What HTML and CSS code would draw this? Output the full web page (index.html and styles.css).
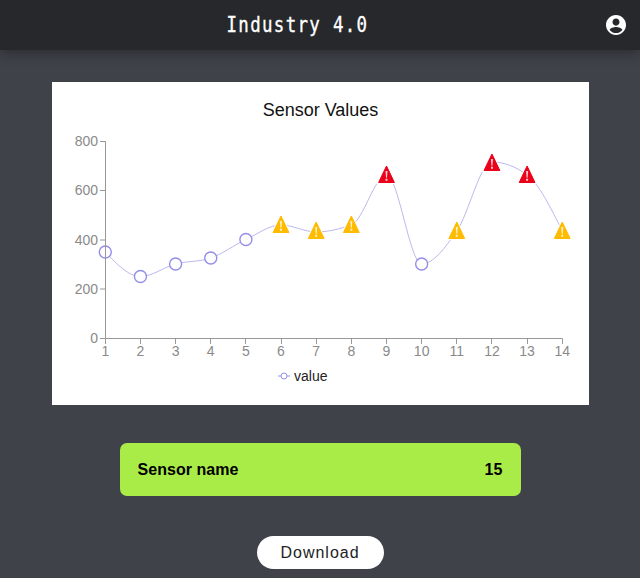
FILE: index.html
```html
<!DOCTYPE html>
<html lang="en">
<head>
<meta charset="utf-8">
<title>Industry 4.0</title>
<link rel="stylesheet" href="styles.css">
</head>
<body>
<header class="topbar">
  <h1 class="brand">Industry 4.0</h1>
  <svg class="account" viewBox="0 0 24 24" width="24" height="24" aria-hidden="true">
    <path fill="#fff" d="M12 2C6.48 2 2 6.48 2 12s4.48 10 10 10 10-4.48 10-10S17.52 2 12 2zm0 3.5c2.07 0 3.5 1.6 3.5 3.6S14.07 12.7 12 12.7 8.500 11.100 8.500 9.100 9.930 5.500 12 5.500zm0 14.600c-2.600 0-4.900-1.200-6.300-3.100.1-1.900 4.200-2.900 6.300-2.900s6.200 1 6.300 2.900c-1.400 1.900-3.700 3.100-6.300 3.100z"/>
  </svg>
</header>
<main class="content">
  <section class="chart-card">
    <svg class="chart" viewBox="52 82 537 323" width="537" height="323" role="img" aria-label="Sensor Values chart">
      <defs>
        <g id="warn">
          <path class="halo" d="M0-9.500 8.600 8H-8.600Z"/>
          <path class="tri" d="M0-9 7.900 7.500H-7.900Z"/>
          <path class="bang" d="M-1-4H1L.5 2.800H-.5ZM-1 3.800H1V5.800H-1Z"/>
        </g>
        <circle id="dot" r="6"/>
      </defs>
      <text class="title" x="320.500" y="115.500">Sensor Values</text>

      <g class="ticks y-ticks">
        <text x="98" y="146">800</text>
        <text x="98" y="195">600</text>
        <text x="98" y="245">400</text>
        <text x="98" y="294">200</text>
        <text x="98" y="343">0</text>
      </g>
      <g class="ticks x-ticks">
        <text x="105.300" y="356">1</text>
        <text x="140.450" y="356">2</text>
        <text x="175.600" y="356">3</text>
        <text x="210.750" y="356">4</text>
        <text x="245.900" y="356">5</text>
        <text x="281" y="356">6</text>
        <text x="316.200" y="356">7</text>
        <text x="351.350" y="356">8</text>
        <text x="386.500" y="356">9</text>
        <text x="421.650" y="356">10</text>
        <text x="456.800" y="356">11</text>
        <text x="491.950" y="356">12</text>
        <text x="527.100" y="356">13</text>
        <text x="562.250" y="356">14</text>
      </g>

      <path class="line" d="M105.300 252C117 264.300 128.700 276.500 140.450 276.500C152.200 276.500 163.900 267.100 175.600 264C187.300 260.900 199 262 210.750 258C222.500 254 234.200 245 245.900 239.500C257.600 234 269.300 225 281 225C292.700 225 304.500 232 316.200 232C327.900 232 339.600 229 351.350 225C363.100 221 374.800 175 386.500 175C398.200 175 409.900 264 421.650 264C433.400 264 445.100 247.800 456.800 231C468.500 214.200 480.200 162 491.950 162C503.700 162 515.400 166.300 527.100 175C538.800 183.700 550.500 207.300 562.250 231"/>

      <g class="dots">
        <use href="#dot" x="105.300" y="252"/>
        <use href="#dot" x="140.450" y="276.500"/>
        <use href="#dot" x="175.600" y="264"/>
        <use href="#dot" x="210.750" y="258"/>
        <use href="#dot" x="245.900" y="239.500"/>
        <use href="#dot" x="421.650" y="264"/>
      </g>
      <g class="axis">
        <path d="M105.500 141V338.500H562.500"/>
        <path d="M100 141.500H105.500M100 190.500H105.500M100 240H105.500M100 289H105.500M100 338.500H105.500"/>
        <path d="M105.500 338.500V344M140.500 338.500V344M175.500 338.500V344M210.500 338.500V344M245.500 338.500V344M281.500 338.500V344M316.500 338.500V344M351.500 338.500V344M386.500 338.500V344M421.500 338.500V344M456.500 338.500V344M491.500 338.500V344M527.500 338.500V344M562.500 338.500V344"/>
      </g>
      <g class="warn-amber">
        <use href="#warn" x="281" y="225"/>
        <use href="#warn" x="316.200" y="231"/>
        <use href="#warn" x="351.350" y="225"/>
        <use href="#warn" x="456.800" y="231"/>
        <use href="#warn" x="562.250" y="231"/>
      </g>
      <g class="warn-red">
        <use href="#warn" x="386.500" y="175"/>
        <use href="#warn" x="491.950" y="163"/>
        <use href="#warn" x="527.100" y="175"/>
      </g>

      <g class="legend">
        <path class="legend-line" d="M278 376H290"/>
        <circle class="legend-dot" cx="284" cy="376" r="3"/>
        <text x="294" y="380.500">value</text>
      </g>
    </svg>
  </section>
  <section class="sensor-bar">
    <span>Sensor name</span>
    <span>15</span>
  </section>
  <button class="download" type="button">Download</button>
</main>
</body>
</html>
```

FILE: styles.css
```css
* { box-sizing: border-box; }

html, body {
  margin: 0;
  height: 578px;
  overflow: hidden;
}

body {
  background: #3f4249;
  font-family: "Liberation Sans", Arial, sans-serif;
}

.topbar {
  position: relative;
  height: 50px;
  padding-right: 46px;
  background: #26282c;
  box-shadow: 0 3px 12px rgba(0, 0, 0, 0.35);
  display: flex;
  align-items: center;
  justify-content: center;
}

.brand {
  margin: 0;
  font-family: "DejaVu Sans Mono", monospace;
  font-size: 21px;
  font-weight: 400;
  letter-spacing: 1.6px;
  color: #fff;
  -webkit-text-stroke: 0.35px #fff;
  transform: scaleX(0.83);
}

.account {
  position: absolute;
  right: 12px;
  top: 13px;
}

.content {
  display: flex;
  flex-direction: column;
  align-items: center;
  padding-top: 32px;
}

.chart-card {
  width: 537px;
  height: 323px;
  background: #fff;
}

.chart {
  display: block;
}

.title {
  font-size: 18px;
  text-anchor: middle;
  fill: #111;
}

.axis path {
  fill: none;
  stroke: #989898;
  stroke-width: 1;
}

.ticks text {
  font-size: 14px;
  fill: #8a8a8a;
}

.y-ticks text { text-anchor: end; }
.x-ticks text { text-anchor: middle; }

.line {
  fill: none;
  stroke: #a9a6ea;
  stroke-width: 0.8;
}

.dots use {
  fill: #fff;
  stroke: #928eea;
  stroke-width: 1.4;
}

.warn-amber { fill: #ffbb00; stroke: #ffbb00; }
.warn-red { fill: #ea0018; stroke: #ea0018; }

.halo {
  fill: none;
  stroke: #fff;
  stroke-width: 2;
}

.tri {
  stroke-width: 1;
  stroke-linejoin: round;
}

.bang {
  fill: #fff;
  stroke: none;
  opacity: 0.8;
}

.legend-line {
  stroke: #928eea;
  stroke-width: 1;
}

.legend-dot {
  fill: #fff;
  stroke: #928eea;
  stroke-width: 1;
}

.legend text {
  font-size: 14px;
  fill: #222;
}

.sensor-bar {
  width: 401px;
  height: 53px;
  margin-top: 38px;
  padding: 0 18px;
  border-radius: 7px;
  background: #a9ec48;
  display: flex;
  align-items: center;
  justify-content: space-between;
  font-size: 16px;
  font-weight: 700;
  letter-spacing: 0.05px;
  color: #000;
}

.download {
  width: 127px;
  height: 33px;
  margin-top: 40px;
  border: 0;
  border-radius: 17px;
  background: #fff;
  color: #222;
  font-family: "Liberation Sans", Arial, sans-serif;
  font-size: 16px;
  letter-spacing: 1px;
  padding: 0;
}
```
